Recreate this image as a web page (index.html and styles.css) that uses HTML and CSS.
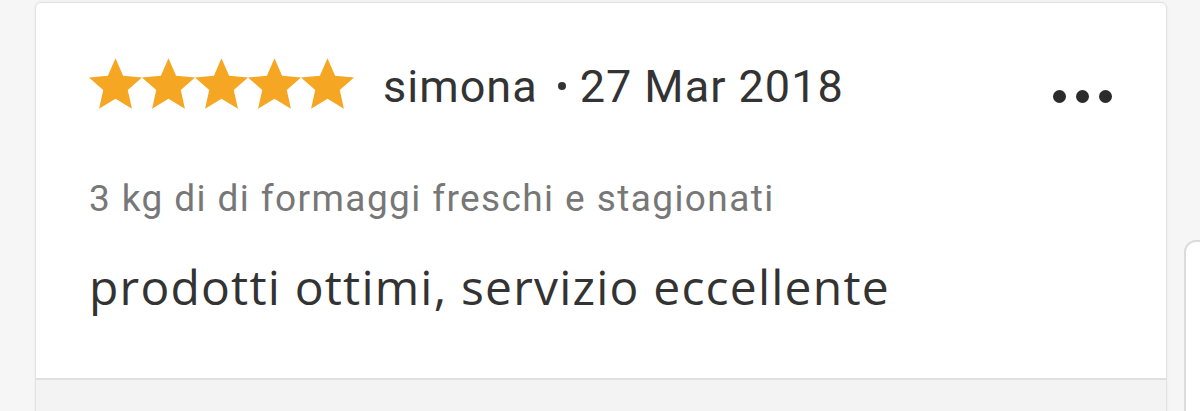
FILE: index.html
```html
<!DOCTYPE html>
<html lang="it">
<head>
    <meta charset="UTF-8">
    <meta name="viewport" content="width=device-width, initial-scale=1.0">
    <title>Recensione</title>
    <link rel="stylesheet" href="styles.css">
</head>
<body>
    <div class="page">
        <div class="review-card">
            <div class="review-body">
                <div class="review-head">
                    <div class="stars">
                        <svg viewBox="1.2 1.8 21.6 20.5"><path d="M12 1.8l3.1 7.1 7.7.7-5.8 5.1 1.7 7.6L12 18.3l-6.7 4 1.7-7.6-5.8-5.1 7.7-.7z"/></svg>
                        <svg viewBox="1.2 1.8 21.6 20.5"><path d="M12 1.8l3.1 7.1 7.7.7-5.8 5.1 1.7 7.6L12 18.3l-6.7 4 1.7-7.6-5.8-5.1 7.7-.7z"/></svg>
                        <svg viewBox="1.2 1.8 21.6 20.5"><path d="M12 1.8l3.1 7.1 7.7.7-5.8 5.1 1.7 7.6L12 18.3l-6.7 4 1.7-7.6-5.8-5.1 7.7-.7z"/></svg>
                        <svg viewBox="1.2 1.8 21.6 20.5"><path d="M12 1.8l3.1 7.1 7.7.7-5.8 5.1 1.7 7.6L12 18.3l-6.7 4 1.7-7.6-5.8-5.1 7.7-.7z"/></svg>
                        <svg viewBox="1.2 1.8 21.6 20.5"><path d="M12 1.8l3.1 7.1 7.7.7-5.8 5.1 1.7 7.6L12 18.3l-6.7 4 1.7-7.6-5.8-5.1 7.7-.7z"/></svg>
                    </div>
                    <div class="author">simona<span class="sep"></span>27 Mar 2018</div>
                    <div class="more"><span></span><span></span><span></span></div>
                </div>
                <div class="product">3 kg di di formaggi freschi e stagionati</div>
                <div class="comment">prodotti ottimi, servizio eccellente</div>
            </div>
            <div class="review-foot"></div>
        </div>
        <div class="next-card"></div>
    </div>
</body>
</html>
```

FILE: styles.css
```css
body {
    margin: 0;
    background-color: #f6f6f6;
    font-family: Roboto, "Liberation Sans", sans-serif;
    color: #333;
    overflow: hidden;
}
.page {
    display: flex;
    align-items: flex-start;
    gap: 17px;
    padding: 2px 0 0 35px;
}
.review-card {
    flex: 0 0 1130px;
    background-color: #fff;
    border: 1px solid #e2e2e2;
    border-radius: 6px;
    box-shadow: 0 0 3px rgba(0, 0, 0, 0.06);
    overflow: hidden;
}
.review-body {
    padding: 52px 52px 0 53px;
    box-sizing: border-box;
    height: 375px;
}
.review-head {
    display: flex;
    align-items: center;
    height: 56px;
}
.stars {
    display: flex;
}
.stars svg {
    width: 53px;
    height: 51px;
    fill: #f5a623;
}
.author {
    margin-left: 29px;
    font-size: 45px;
    letter-spacing: 1px;
    padding-top: 6px;
    color: #333;
}
.sep {
    display: inline-block;
    width: 8px;
    height: 8px;
    border-radius: 50%;
    background-color: #333;
    vertical-align: 12px;
    margin: 0 14px 0 20px;
}
.more {
    display: flex;
    gap: 10px;
    margin-left: auto;
    margin-right: 2px;
    padding-top: 26px;
}
.more span {
    width: 13px;
    height: 13px;
    border-radius: 50%;
    background-color: #2b2b2b;
}
.product {
    margin-top: 66px;
    font-size: 37px;
    letter-spacing: 1.4px;
    color: #777;
}
.comment {
    margin-top: 34px;
    font-family: "Open Sans", sans-serif;
    font-size: 48px;
    letter-spacing: 1.2px;
    color: #333;
}
.review-foot {
    height: 60px;
    background-color: #f3f3f3;
    border-top: 2px solid #e0e0e0;
}
.next-card {
    flex: 0 0 200px;
    height: 300px;
    margin-top: 238px;
    background-color: #fff;
    border: 2px solid #dcdcdc;
    border-radius: 12px;
}
```
